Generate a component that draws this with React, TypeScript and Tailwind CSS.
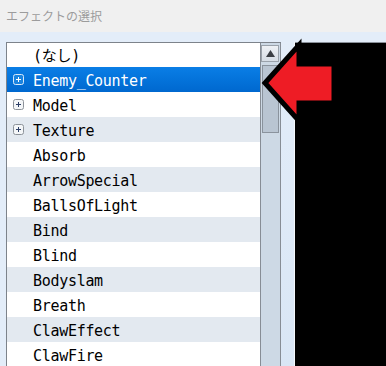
import React from "react";

const effects = [
  { name: "(なし)", expand: false },
  { name: "Enemy_Counter", expand: true },
  { name: "Model", expand: true },
  { name: "Texture", expand: true },
  { name: "Absorb", expand: false },
  { name: "ArrowSpecial", expand: false },
  { name: "BallsOfLight", expand: false },
  { name: "Bind", expand: false },
  { name: "Blind", expand: false },
  { name: "Bodyslam", expand: false },
  { name: "Breath", expand: false },
  { name: "ClawEffect", expand: false },
  { name: "ClawFire", expand: false },
];

function PlusBox({ selected }: { selected: boolean }) {
  return (
    <svg width="11" height="11" viewBox="0 0 11 11" className="shrink-0">
      <rect
        x="0.5"
        y="0.5"
        width="10"
        height="10"
        rx="2"
        fill={selected ? "#1a84e0" : "#f4f6f8"}
        stroke={selected ? "#d8e8f8" : "#8d939a"}
      />
      <path d="M3 5.5h5M5.5 3v5" stroke={selected ? "#ffffff" : "#2c3e66"} strokeWidth="1" />
    </svg>
  );
}

export default function App() {
  const selected = 1;

  return (
    <div className="relative w-[386px] h-[366px] overflow-hidden bg-[#e3edf9] font-['Noto_Sans_CJK_JP',sans-serif]">
      {/* Title */}
      <div className="h-[32px] bg-[#f0f0f0] flex items-center pl-[6px] text-[12px] text-[#9c9c9c]">
        エフェクトの選択
      </div>

      <div className="flex pt-[10px] pl-[6px]">
        {/* List */}
        <div className="flex border-t border-l border-[#7d838b] bg-white">
          <div className="w-[253px] flex flex-col font-['DejaVu_Sans_Mono','Noto_Sans_CJK_JP',monospace] text-[15px] tracking-[-0.3px]">
            {effects.map((e, i) => {
              const isSel = i === selected;
              return (
                <div
                  key={e.name}
                  className={
                    "flex items-center shrink-0 " +
                    (i === 0 ? "h-[24px] " : "h-[25px] ") +
                    (isSel
                      ? "bg-gradient-to-b from-[#0a7ee6] to-[#0068cf] text-white"
                      : i % 2 === 1
                      ? "bg-[#e3e9f0] text-black"
                      : "bg-white text-black")
                  }
                >
                  <div className="w-[26px] pl-[6px] flex items-center">
                    {e.expand && <PlusBox selected={isSel} />}
                  </div>
                  <span className="leading-none pt-[3px]">{e.name}</span>
                </div>
              );
            })}
          </div>

          {/* Scrollbar */}
          <div className="w-[21px] border-l border-r border-[#878d95] bg-[#cdd9e5] flex flex-col items-start">
            <div className="mt-[2px] w-[18px] h-[17px] border border-[#9aa2ab] bg-gradient-to-b from-[#eef1f5] to-[#d6dde5] flex items-center justify-center">
              <svg width="9" height="7" viewBox="0 0 9 7">
                <path d="M4.5 0L9 7H0z" fill="#3b3f45" />
              </svg>
            </div>
            <div className="mt-[3px] ml-[1px] w-[17px] h-[68px] border border-[#8a939d] bg-[#b9c5d2]" />
          </div>
        </div>

        {/* Side strip */}
        <div className="w-[14px] bg-gradient-to-b from-[#e3edf9] to-[#d9e6f5] border-r border-[#f4f8fc]" />

        {/* Preview */}
        <div className="flex-1 h-[330px] bg-black border-t border-[#8a9099]" />
      </div>

      {/* Pointer arrow */}
      <svg
        className="absolute left-0 top-0 pointer-events-none"
        width="386"
        height="366"
        viewBox="0 0 386 366"
      >
        <polygon
          points="265,83 299,45 299,64 334,64 334,103 299,103 299,121"
          fill="#ee1c25"
          stroke="#000"
          strokeWidth="5"
          strokeLinejoin="miter"
        />
      </svg>
    </div>
  );
}
